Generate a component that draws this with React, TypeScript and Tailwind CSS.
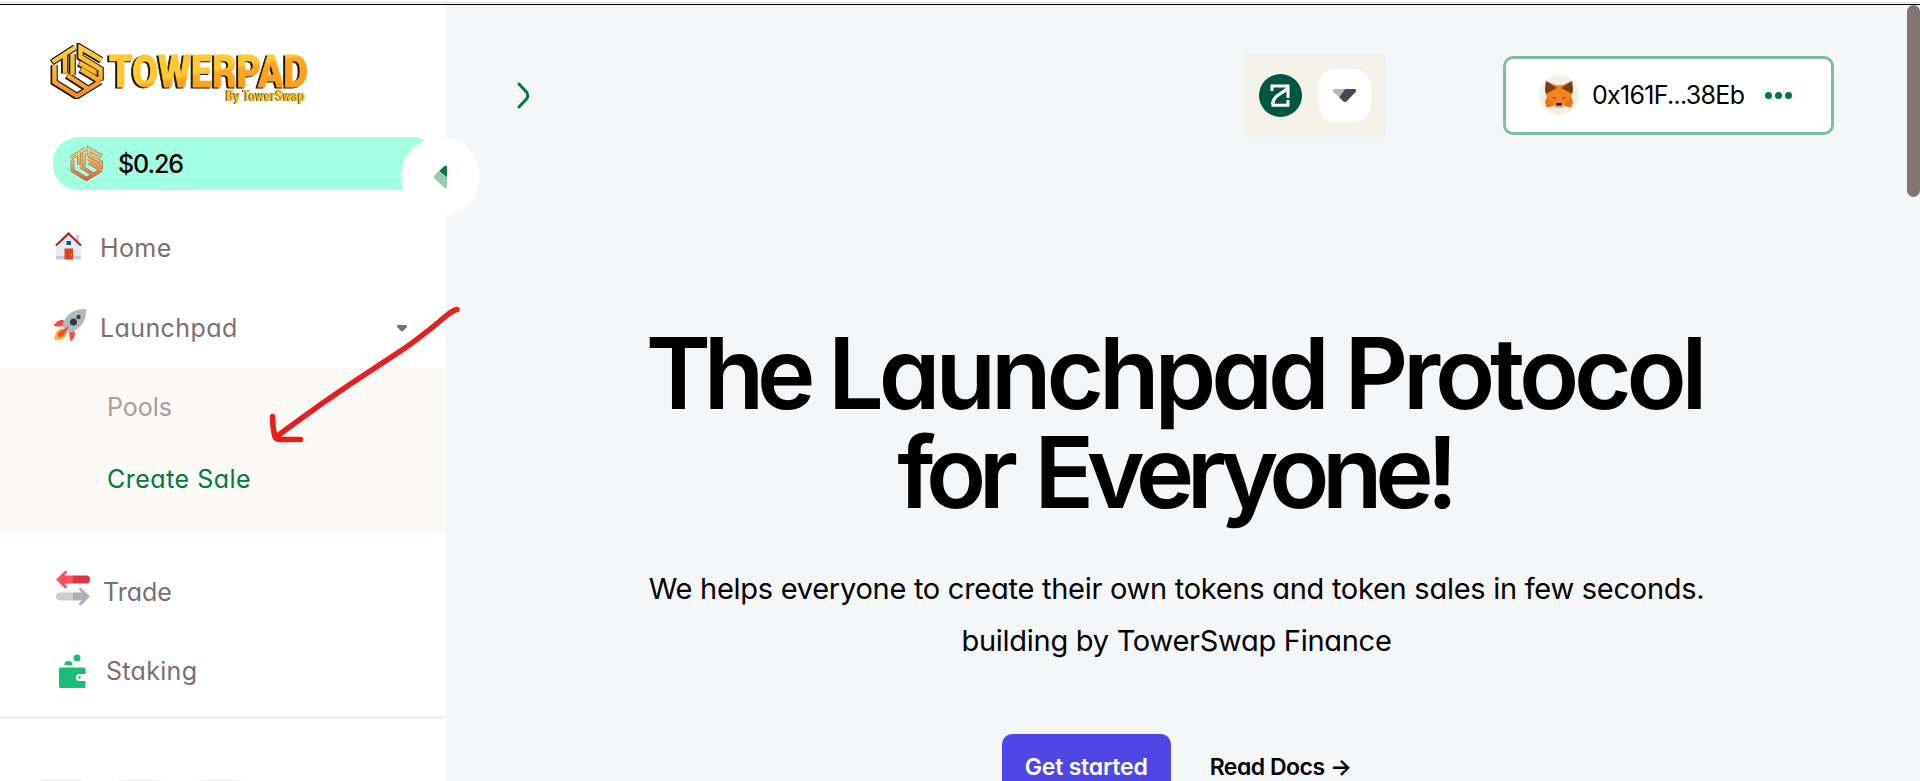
import React from "react";

const INTER = "font-['Inter','Liberation_Sans',sans-serif] [font-feature-settings:'cv11','ss03']";

const CUBE_LINES = [
  "M2.5 19 25 4.500M15 12V30",
  "M4.500 22V39L27 53 50.500 38.500M38.500 46 17.500 32.500M50 38 31 26.500",
  "M22.500 11V32",
  "M51.500 17 30.500 4.500V14L50.500 26V37.500M29.500 20 46 29.500",
].join("");

function CubeMark({ className, pale = false }: { className: string; pale?: boolean }) {
  const id = pale ? "cube-pale" : "cube-gold";
  return (
    <svg viewBox="0 0 54 56" className={className} fill="none">
      <defs>
        <linearGradient id={id} x1="0" y1="4" x2="0" y2="54" gradientUnits="userSpaceOnUse">
          <stop offset="0" stopColor={pale ? "#f7d27a" : "#ffd033"} />
          <stop offset="0.45" stopColor={pale ? "#f0a866" : "#f9bb30"} />
          <stop offset="1" stopColor={pale ? "#e2622c" : "#f78a22"} />
        </linearGradient>
      </defs>
      <path d={CUBE_LINES} stroke={pale ? "#7d6a4a" : "#1d1a14"} strokeWidth={pale ? 6 : 6.6} />
      {!pale && <path d={CUBE_LINES} transform="translate(-1 .6)" stroke="#1d1a14" strokeWidth="6" />}
      <path d={CUBE_LINES} stroke={"url(#" + id + ")"} strokeWidth="4.400" />
    </svg>
  );
}

function Logo() {
  return (
    <div className="flex h-[62px]">
      <CubeMark className="h-[56px] w-[54px] shrink-0" />
      <svg viewBox="54 0 210 62" className="block h-[62px] w-[210px] shrink-0 overflow-visible">
        <defs>
          <linearGradient id="word" gradientUnits="userSpaceOnUse" x1="150" y1="12" x2="156" y2="46">
            <stop offset="0.5" stopColor="#ffc933" />
            <stop offset="0.58" stopColor="#ffa722" />
            <stop offset="1" stopColor="#ffa01f" />
          </linearGradient>
        </defs>
        <g fontFamily="'Roboto','Liberation Sans',sans-serif" fontWeight="900">
          <text x="59" y="43.500" fontSize="44" textLength="199" lengthAdjust="spacingAndGlyphs" fill="url(#word)" stroke="url(#word)" strokeWidth="0.8" className="drop-shadow-[-1.5px_1px_0_#1d1a14]">
            TOWERPAD
          </text>
          <text x="176" y="57.500" fontSize="14" textLength="79" lengthAdjust="spacingAndGlyphs" fill="#f0bb2a" className="drop-shadow-[-1px_0.5px_0_#5a4718]">
            By TowerSwap
          </text>
        </g>
      </svg>
    </div>
  );
}

function HomeIcon() {
  return (
    <svg viewBox="0 0 28 28" className="h-7 w-7">
      <path d="M21 3h3v9h-3z" fill="#c5cae9" />
      <path d="M14 2 26 14V24H1V14Z" fill="#e8eaf6" />
      <path d="M1 24h25v3.500H1z" fill="#c5cae9" />
      <path d="M9.500 16.500h8.500v11H9.500z" fill="#dd4416" />
      <path d="M15.500 21.500h1.500v2.500h-1.500z" fill="#f06b42" />
      <path d="M11.500 9h4.500v4h-4.500z" fill="#01579b" />
      <path d="M1 13.500 13.500 1.500 26 13.500" fill="none" stroke="#b71c1c" strokeWidth="2" />
    </svg>
  );
}

function RocketIcon() {
  return (
    <svg viewBox="0 0 34 34" className="h-[34px] w-[34px]">
      <path d="M11 12.500C6 11 3.500 13.500.5 18l9 .5ZM21.500 23c1 5-.5 8-4 10.500l-1.500-9Z" fill="#ff473e" />
      <path d="M9 20C3.500 21.500 1.500 26 1.500 32.500 8 32.500 13 30 14 25Z" fill="#ffb636" />
      <path d="M33 1C22 .5 13 5 9 18l7 7C29 21 33.500 12 33 1Z" fill="#adbbbc" />
      <path d="M16 18 6 24c-1.500 2-1.500 3-.5 5 4 .5 7-3 10.500-11Z" fill="#ff473e" />
      <circle cx="20.500" cy="14" r="3.500" fill="#2b3b47" />
      <circle cx="25.500" cy="9" r="2.200" fill="#2b3b47" />
    </svg>
  );
}

function TradeIcon() {
  return (
    <svg viewBox="0 0 34 36" className="h-9 w-[34px]">
      <path d="M17 5.500h13a4 4 0 0 1 0 8H17z" fill="#dc3545" />
      <path d="M17 5.500H8.500L11.500 2 9.500.500 0 9.500 9 18.500 11.500 17 8.500 13.500H17z" fill="#ff4f5b" />
      <path d="M17 22.500H4a4 4 0 0 0 0 8h13z" fill="#cccdd0" />
      <path d="M17 22.500h8.500L22.500 19 24.500 17.500 34 26.500l-9 9-2.500-1.500 3-3.500H17z" fill="#aeafbc" />
    </svg>
  );
}

function StakingIcon() {
  return (
    <svg viewBox="0 0 27 34" className="h-[34px] w-[27px]" fill="#1abc79">
      <circle cx="18" cy="4" r="3.500" />
      <path d="M5.500 11a4 4 0 0 1 8 0z" />
      <path d="M1.500 13.500h24a1 1 0 0 1 1 1V20h-6a3 3 0 0 0 0 7h6v6a1 1 0 0 1-1 1h-24a1.500 1.500 0 0 1-1.500-1.500V15a1.500 1.500 0 0 1 1.500-1.500z" />
      <circle cx="20.500" cy="23.500" r="1.200" />
    </svg>
  );
}

function FoxIcon() {
  return (
    <svg viewBox="0 0 40 40" className="h-10 w-10 shrink-0">
      <circle cx="20" cy="20" r="20" fill="#f5efe6" />
      <path d="M7 6 16.500 10h7L33 6l1 9-2 7 2 5-2 5.500-6-1.500-3.500 2h-5L14 31l-6 1.500L6 27l2-5-2-7Z" fill="#f5841f" />
      <path d="M7 6l11 7-4 2-7 4-1-4ZM33 6l-11 7 4 2 7 4 1-4Z" fill="#763e1a" />
      <path d="M12 21l5 2-1 2ZM28 21l-5 2 1 2Z" fill="#b25423" />
      <path d="M8 22l6 5v4l-6 1.500L6 27ZM32 22l-6 5v4l6 1.500L34 27Z" fill="#e4761b" />
      <path d="M14 31l3-2h6l3 2-3.500 2h-5Z" fill="#c9b8aa" />
      <path d="M17.500 28h5l.5 2.500h-6Z" fill="#161616" />
    </svg>
  );
}

function Sidebar() {
  const row = "flex shrink-0 items-center text-[25px] leading-[30px] text-[#7a6e70]";
  return (
    <aside className="flex w-[446px] shrink-0 flex-col bg-white">
      <div className="shrink-0 pl-[50px] pt-[38px]">
        <Logo />
      </div>
      <div className="relative ml-[53px] mt-8 flex h-[53px] w-[385px] shrink-0 items-center rounded-[25px] bg-[#a2ffe2] pl-4">
        <CubeMark className="h-[35px] w-[35px]" pale />
        <span className="ml-[14px] mt-[2px] text-[25px] font-medium tracking-[-1.1px] text-black">$0.26</span>
        <div className="absolute left-[348px] top-0 flex h-[79px] w-[79px] items-center rounded-full bg-white pl-[33px]">
          <svg viewBox="0 0 13 24" className="h-6 w-[13px]">
            <path d="M5 6 10 1.500Q13 -1 13 3V12.500Z" fill="#007a40" />
            <path d="M5 6 13 12.500V21Q13 25 10 22.500L1 14Q-1 12 1 10Z" fill="#99c9b2" />
          </svg>
        </div>
      </div>
      <div className={row + " mt-[40px] h-8 pl-[55px]"}>
        <HomeIcon />
        <span className="ml-[17px] mt-[3px] tracking-[0.4px]">Home</span>
      </div>
      <div className={row + " mt-[46px] h-[34px] pl-[53px]"}>
        <RocketIcon />
        <span className="ml-[13px] mt-[6px] tracking-[0.4px]">Launchpad</span>
        <svg viewBox="0 0 10 7" className="ml-[159px] mt-[6px] h-[7px] w-[10px]">
          <path d="M1 0h8q1 0 1 1v1L6 6Q5 7 4 6L0 2V1Q0 0 1 0Z" fill="#7a6e70" />
        </svg>
      </div>
      <div className="mt-[26px] flex h-[165px] shrink-0 flex-col bg-[#faf9f6] pl-[107px] pt-6 text-[25px] leading-[30px]">
        <span className="text-[#a69fa0]">Pools</span>
        <span className="mt-[42px] tracking-[0.5px] text-[#007a40]">Create Sale</span>
      </div>
      <div className={row + " mt-[37px] h-9 pl-14"}>
        <TradeIcon />
        <span className="ml-[13px] mt-2">Trade</span>
      </div>
      <div className={row + " mt-[48px] h-[34px] pl-[59px]"}>
        <StakingIcon />
        <span className="ml-[20px] tracking-[0.3px]">Staking</span>
      </div>
      <div className="mt-[28px] h-[3px] shrink-0 bg-[#f2f2f2]" />
      <div className="mt-[60px] flex shrink-0 gap-[30px] pl-[37px]">
        <div className="h-12 w-[49px] rounded-lg bg-[#f8f2ee]" />
        <div className="h-12 w-[49px] rounded-lg bg-[#f8f2ee]" />
        <div className="h-12 w-[49px] rounded-lg bg-[#f8f2ee]" />
      </div>
    </aside>
  );
}

function Header() {
  return (
    <header className="flex h-[80px] shrink-0 items-center pr-[73px]">
      <svg viewBox="0 0 13 27" className="ml-[71px] mt-px h-[27px] w-[13px]">
        <path d="M2 2 9.500 10Q12 13.500 9.500 17L2 25" fill="none" stroke="#007a40" strokeWidth="3" strokeLinecap="round" />
      </svg>
      <div className="ml-auto flex h-20 w-[138px] items-center bg-[#f5f2ea] pl-[13px] shadow-[0_0_2px_#e4e4e0]">
        <svg viewBox="0 0 43 43" className="h-[43px] w-[43px]">
          <circle cx="21.500" cy="21.500" r="21.500" fill="#005741" />
          <path d="M13 17V12H29V24M14 28V31.200H29V26" fill="none" stroke="#fff" strokeWidth="3" />
          <path d="M28.500 14C24 20 15 20 13.500 30" fill="none" stroke="#fff" strokeWidth="3.200" />
        </svg>
        <div className="ml-4 flex h-[53px] w-[53px] items-center justify-center rounded-[18px] bg-white">
          <svg viewBox="0 0 23 13" className="h-[13px] w-[23px]">
            <path d="M12 0H22Q24 1 22.500 3L14 12Q12 14 10 12L6 8Z" fill="#474756" />
            <path d="M12 0H1Q-1 1 .5 3L6 8Z" fill="#b5b5ba" />
          </svg>
        </div>
      </div>
      <div className="ml-[119px] flex h-[79px] w-[331px] items-center rounded-[10px] border-[3px] border-[#80bca0] bg-white pl-[33px]">
        <FoxIcon />
        <span className="ml-[13px] mt-[2px] w-[153px] shrink-0 whitespace-nowrap text-[25px] tracking-[-0.7px] text-black">0x161F...38Eb</span>
        <div className="ml-[20px] flex gap-[3px]">
          <i className="size-[7px] rounded-full bg-[#007a40]" />
          <i className="size-[7px] rounded-full bg-[#007a40]" />
          <i className="size-[7px] rounded-full bg-[#007a40]" />
        </div>
      </div>
    </header>
  );
}

export default function App() {
  return (
    <div className={"relative flex h-[781px] w-[1920px] flex-col overflow-hidden bg-white " + INTER}>
      <div className="h-[5px] shrink-0 border-b border-black bg-white pt-[2px]">
        <div className="h-px bg-[#dcdcdc]" />
      </div>
      <div className="flex min-h-0 flex-1">
        <Sidebar />
        <main className="flex w-[1461px] shrink-0 flex-col bg-[#f4f6f8] pt-[50px]">
          <Header />
          <section className="ml-[203px] mt-[189px] flex w-[1055px] flex-col items-center whitespace-nowrap text-black">
            <h1 className="pr-[5px] text-center text-[99px] font-semibold leading-[99px] tracking-[-5.1px]">
              <span className="tracking-[-7.4px]">The</span> Launchpad <span className="tracking-[-5.2px]">Protocol</span>
              <br />
              <span className="tracking-[-7.4px] [word-spacing:6px]">for Everyone!</span>
            </h1>
            <p className="mt-[41px] text-center text-[29px] leading-[52px] tracking-[-0.27px]">
              We helps everyone to create their own tokens and token sales in few seconds.
              <br />
              building by TowerSwap Finance
            </p>
            <div className="mt-[67px] flex text-[23px] font-semibold">
              <button className="h-[66px] w-[169px] rounded-[10px] bg-[#5046e5] tracking-[-0.2px] text-white">Get started</button>
              <button className="ml-[39px] h-[66px] tracking-[-0.5px]">Read Docs →</button>
            </div>
          </section>
        </main>
        <div className="w-[13px] shrink-0 bg-[#f4f6f8]">
          <div className="h-[192px] rounded-full bg-[#827576]" />
        </div>
      </div>
      <svg viewBox="0 0 240 170" className="pointer-events-none absolute left-[240px] top-[290px] h-[170px] w-[240px]">
        <path d="M217 19.500C212 20 206 26 200 31 188 41 174 52 162 60L118 89Q80 114 36 147M32.500 126.500Q32.500 138 35 147 36 149.500 40 149.500H60.500" fill="none" stroke="#e81d1d" strokeWidth="5.500" strokeLinecap="round" strokeLinejoin="round" />
      </svg>
    </div>
  );
}
